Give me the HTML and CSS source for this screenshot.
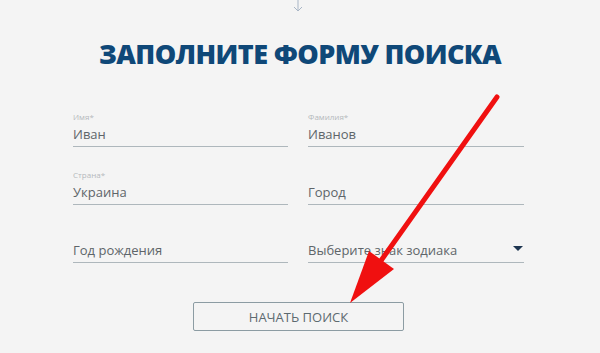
FILE: index.html
```html
<!DOCTYPE html>
<html lang="ru">

<head>
    <meta charset="UTF-8">
    <meta name="viewport" content="width=device-width, initial-scale=1.0">
    <title>Поиск</title>
    <link rel="stylesheet" href="styles.css">
</head>

<body>
    <div class="page">
        <div class="down">
            <svg width="12" height="13" viewBox="0 0 12 13">
                <path d="M6 0 V11 M2 7 L6 11 L10 7" fill="none" stroke="#a9b6c6" stroke-width="1" />
            </svg>
        </div>
        <h1 class="title">ЗАПОЛНИТЕ ФОРМУ ПОИСКА</h1>

        <form class="search">
            <div class="field">
                <label>Имя*</label>
                <div class="value">Иван</div>
            </div>
            <div class="field">
                <label>Фамилия*</label>
                <div class="value">Иванов</div>
            </div>
            <div class="field">
                <label>Страна*</label>
                <div class="value">Украина</div>
            </div>
            <div class="field">
                <label></label>
                <div class="value">Город</div>
            </div>
            <div class="field">
                <label></label>
                <div class="value">Год рождения</div>
            </div>
            <div class="field select">
                <label></label>
                <div class="value">Выберите знак зодиака</div>
                <span class="caret"></span>
            </div>
        </form>

        <div class="actions">
            <button class="btn" type="button">НАЧАТЬ ПОИСК</button>
        </div>

        <!-- red pointer over the form -->
        <svg class="pointer" width="600" height="353" viewBox="0 0 600 353">
            <line x1="497" y1="97" x2="380" y2="262" stroke="#f01010" stroke-width="5" stroke-linecap="round" />
            <polygon points="369,251 394,269 350,303" fill="#f01010" />
        </svg>
    </div>
</body>

</html>
```

FILE: styles.css
```css
/* base */
body {
    margin: 0;
    background: #f4f4f4;
    font-family: "Open Sans", "Noto Sans", sans-serif;
    color: #5d6468;
}

.page {
    position: relative;
    width: 600px;
    height: 353px;
    overflow: hidden;
}

.down {
    display: flex;
    justify-content: center;
    height: 12px;
    margin-left: -5px;
}

.title {
    margin: 26px 0 0 0;
    text-align: center;
    font-size: 27px;
    line-height: 32px;
    font-weight: 800;
    color: #0f4878;
    letter-spacing: -0.6px;
}

/* form grid */
.search {
    display: grid;
    grid-template-columns: 215px 216px;
    column-gap: 20px;
    row-gap: 22px;
    margin: 41px 0 0 73px;
    width: 451px;
}

.field {
    position: relative;
    height: 36px;
    border-bottom: 1px solid #aeb7bc;
    box-sizing: border-box;
}

.field label {
    display: block;
    height: 13px;
    font-size: 8px;
    line-height: 12px;
    color: #b4b9bc;
}

.field .value {
    font-size: 13px;
    line-height: 20px;
    color: #5e6569;
}

.caret {
    position: absolute;
    right: 1px;
    top: 19px;
    width: 0;
    height: 0;
    border-left: 5px solid transparent;
    border-right: 5px solid transparent;
    border-top: 5px solid #1d3550;
}

/* button */
.actions {
    margin: 39px 0 0 193px;
}

.btn {
    width: 211px;
    height: 29px;
    background: transparent;
    border: 1px solid #8c9ca3;
    border-radius: 2px;
    font-family: "Open Sans", sans-serif;
    font-size: 13px;
    color: #5d6a70;
    cursor: pointer;
    padding: 0;
}

.pointer {
    position: absolute;
    left: 0;
    top: 0;
}
```
